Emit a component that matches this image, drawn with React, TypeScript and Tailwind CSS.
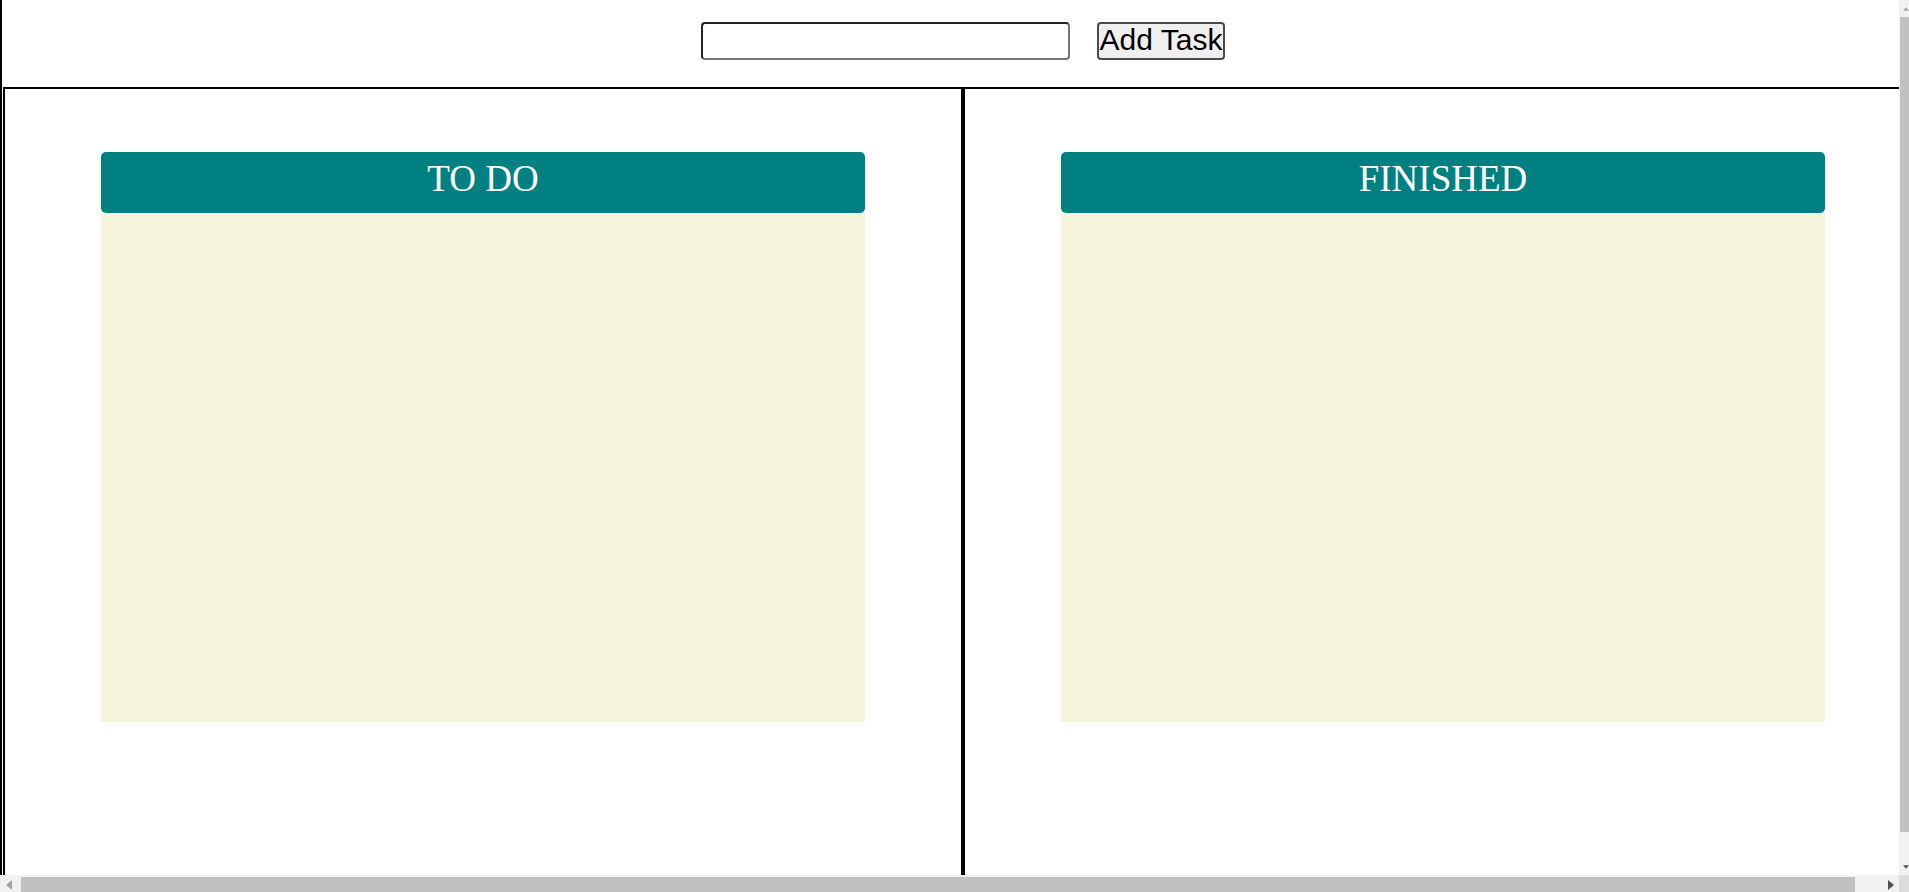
import React from "react";

function Card({ title }: { title: string }) {
  return (
    <div className="ml-[96px] mt-[63px] w-[764px]">
      <div
        className="h-[61px] rounded-[5px] bg-[#008080] pt-[6px] text-center text-[37px] leading-[41px] text-white"
        style={{ fontFamily: '"Liberation Serif", "Times New Roman", serif' }}
      >
        {title}
      </div>
      <div className="h-[509px] bg-[#f5f5dc]" />
    </div>
  );
}

function Tri({ dir, color }: { dir: "left" | "right" | "up" | "down"; color: string }) {
  const pts: Record<string, string> = {
    left: "6,0 6,10 0,5",
    right: "0,0 0,10 6,5",
    up: "0,6 10,6 5,0",
    down: "0,0 10,0 5,6",
  };
  const horiz = dir === "left" || dir === "right";
  return (
    <svg width={horiz ? 6 : 10} height={horiz ? 10 : 6} viewBox={horiz ? "0 0 6 10" : "0 0 10 6"}>
      <polygon points={pts[dir]} fill={color} />
    </svg>
  );
}

export default function App() {
  return (
    <div
      className="flex h-[892px] w-[1909px] flex-col overflow-hidden bg-white"
      style={{ fontFamily: '"Liberation Sans", Arial, sans-serif' }}
    >
      <div className="flex h-[875px]">
        {/* viewport */}
        <div className="h-[875px] w-[1899px] overflow-hidden">
          <div className="w-[1925px] border-l-2 border-black">
            <div className="flex h-[87px] justify-center gap-[27px] pr-[1px] pt-[22px]">
              <input
                type="text"
                className="h-[38px] w-[369px] rounded-[4px] border-2 border-b-[#767676] border-l-[#222] border-r-[#767676] border-t-[#222] bg-white outline-none"
              />
              <button className="h-[38px] rounded-[4px] border-2 border-[#4a4a4a] bg-[#efefef] px-[1px] pb-[3px] pt-0 text-[30px] leading-[31px] text-black">
                Add Task
              </button>
            </div>
            <div className="flex pl-[1px]">
              <div className="h-[820px] w-[960px] border-2 border-black">
                <Card title="TO DO" />
              </div>
              <div className="h-[820px] w-[960px] border-2 border-black">
                <Card title="FINISHED" />
              </div>
            </div>
          </div>
        </div>
        {/* vertical scrollbar (partially visible) */}
        <div className="flex h-[875px] w-[10px] flex-col bg-[#f1f1f1]">
          <div className="flex h-[17px] items-center pl-[4px]">
            <Tri dir="up" color="#a3a3a3" />
          </div>
          <div className="ml-[1px] h-[815px] bg-[#c1c1c1]" />
          <div className="flex-1" />
          <div className="flex h-[17px] items-center pl-[4px]">
            <Tri dir="down" color="#505050" />
          </div>
        </div>
      </div>
      {/* horizontal scrollbar */}
      <div className="flex h-[17px]">
        <div className="flex h-[17px] w-[1899px] bg-[#f1f1f1]">
          <div className="flex h-[17px] w-[17px] items-center justify-center pt-[3px]">
            <Tri dir="left" color="#a3a3a3" />
          </div>
          <div className="ml-[4px] mt-[2px] h-[15px] w-[1834px] bg-[#c1c1c1]" />
          <div className="flex-1" />
          <div className="flex h-[17px] w-[17px] items-center justify-center pt-[3px]">
            <Tri dir="right" color="#505050" />
          </div>
        </div>
        <div className="h-[17px] w-[10px] bg-[#dcdcdc]" />
      </div>
    </div>
  );
}
